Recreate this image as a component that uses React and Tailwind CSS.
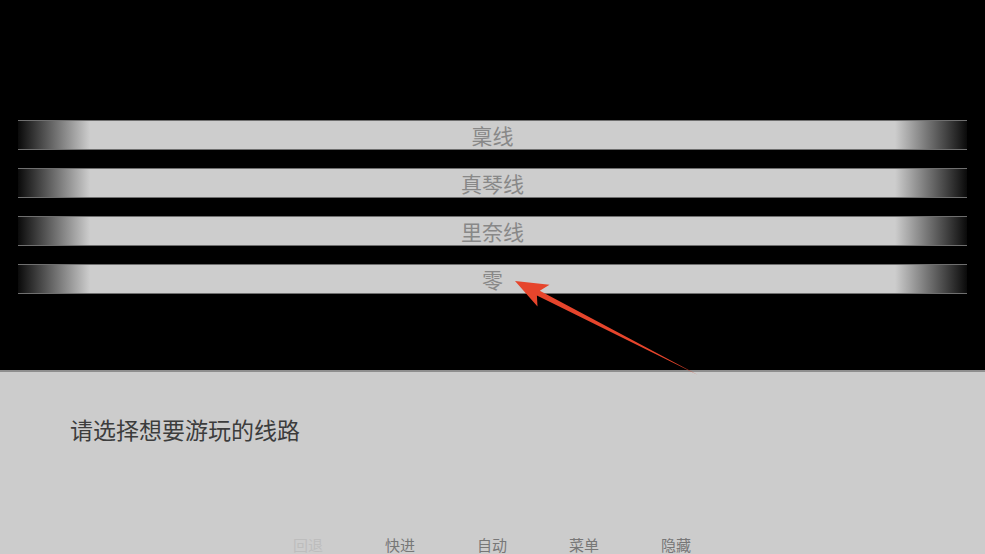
import React from "react";

const routes = ["稟线", "真琴线", "里奈线", "零"];

const controls = [
  { label: "回退", dim: true },
  { label: "快进" },
  { label: "自动" },
  { label: "菜单" },
  { label: "隐藏" },
];

const cjk = { fontFamily: '"Noto Sans CJK SC", "Noto Sans", sans-serif' };

export default function App() {
  return (
    <div className="relative w-[985px] h-[554px] overflow-hidden bg-black" style={cjk}>
      {/* route choices */}
      <div className="h-[370px] px-[18px] pt-[120px] flex flex-col gap-[18px]">
        {routes.map((r) => (
          <div
            key={r}
            className="h-[30px] border-y border-[#6f6f6f] bg-[linear-gradient(to_right,#0a0a0a_0px,#cdcdcd_72px,#cdcdcd_calc(100%-72px),#0a0a0a_100%)] flex items-center justify-center"
          >
            <span className="text-[21px] leading-none text-[#888888]">{r}</span>
          </div>
        ))}
      </div>

      {/* message box */}
      <div className="h-[184px] border-t-2 border-[#8e8e8e] bg-[#cccccc] flex flex-col">
        <p className="pl-[70px] pt-[46px] text-[23px] leading-none text-[#3c3c3c]">请选择想要游玩的线路</p>
        <div className="mt-auto flex pl-[262px] pb-[2px]">
          {controls.map((c) => (
            <span
              key={c.label}
              className={`w-[92px] text-center text-[15px] leading-none ${c.dim ? "text-[#bdbdbd]" : "text-[#777777]"}`}
            >
              {c.label}
            </span>
          ))}
        </div>
      </div>

      {/* annotation arrow */}
      <svg className="absolute inset-0 pointer-events-none" width="985" height="554" viewBox="0 0 985 554">
        <polygon
          points="515,281 549.5,284.7 539.8,290.8 698,375 536.9,295.5 537.5,306.5"
          fill="#e6452c"
        />
      </svg>
    </div>
  );
}
